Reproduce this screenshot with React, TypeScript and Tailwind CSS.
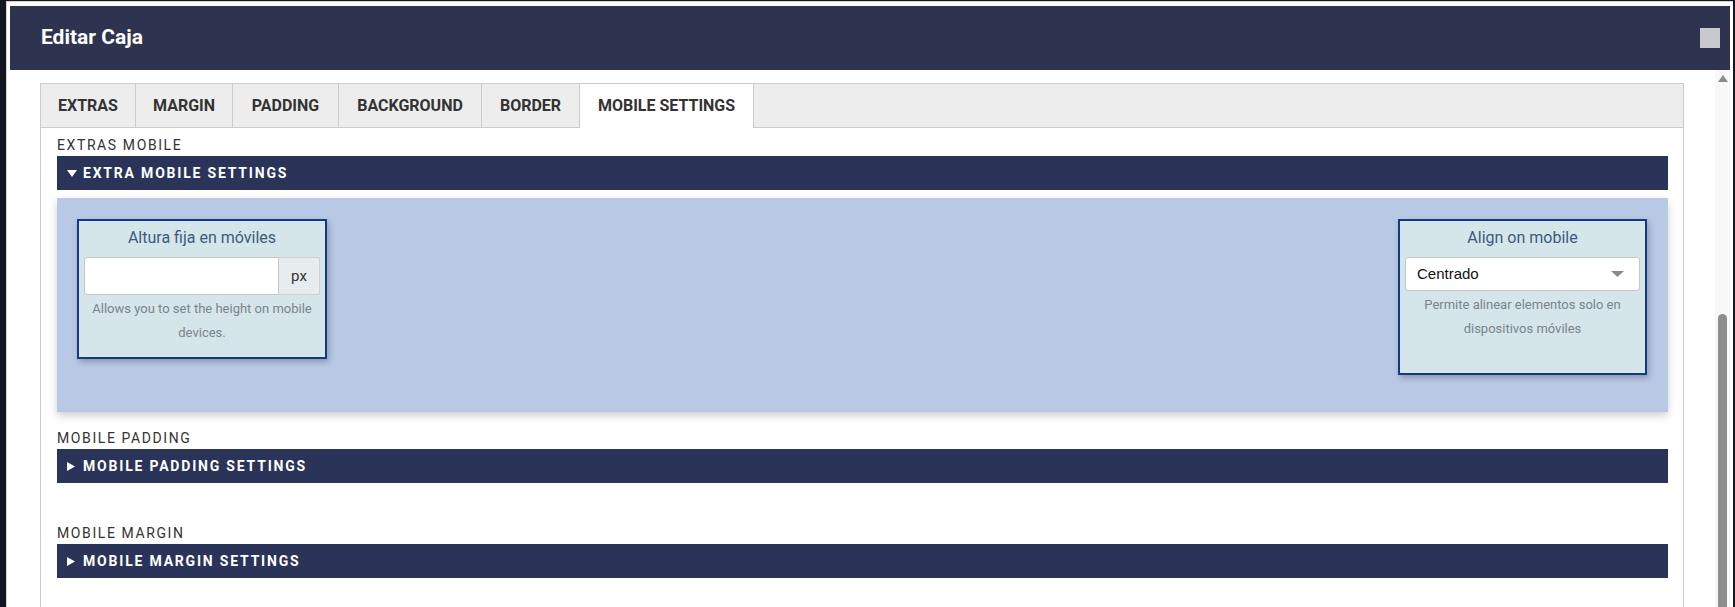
import React from "react";

const tabs: { t: string; w: string }[] = [
  { t: "EXTRAS", w: "w-[95px]" },
  { t: "MARGIN", w: "w-[97px]" },
  { t: "PADDING", w: "w-[106px]" },
  { t: "BACKGROUND", w: "w-[143px]" },
  { t: "BORDER", w: "w-[98px]" },
  { t: "MOBILE SETTINGS", w: "w-[174px]" },
];

function Down() {
  return (
    <svg width="10" height="7" viewBox="0 0 10 7" className="mr-[6px] shrink-0">
      <polygon points="0,0 10,0 5,7" fill="#fff" />
    </svg>
  );
}

function Right() {
  return (
    <svg width="8" height="9" viewBox="0 0 8 9" className="mr-[8px] shrink-0">
      <polygon points="0,0 8,4.5 0,9" fill="#fff" />
    </svg>
  );
}

function SectionBar({ open, text }: { open?: boolean; text: string }) {
  return (
    <div className="flex h-[34px] items-center bg-[#293458] pl-[10px] text-[14px] font-bold tracking-[1.8px] text-white">
      {open ? <Down /> : <Right />}
      <span>{text}</span>
    </div>
  );
}

function Label({ text }: { text: string }) {
  return <div className="mb-px text-[14px] leading-[20px] tracking-[1.6px] text-[#333]">{text}</div>;
}

export default function App() {
  return (
    <div className="h-[607px] w-[1735px] overflow-hidden bg-[#131722] pl-[6px] pr-[2px] pt-px font-['Roboto',sans-serif]">
      <div className="flex h-[620px] flex-col border-l border-t border-[#d4d4d4] bg-white pl-[3px] pr-[3px] pt-[4px]">
        <div className="flex h-[64px] shrink-0 items-center justify-between bg-[#2e3450] pl-[31px] pr-[10px]">
          <div className="text-[21px] font-bold text-white">Editar Caja</div>
          <div className="h-[20px] w-[20px] bg-[#c8c9ce]" />
        </div>
        <div className="flex flex-1">
          <div className="flex-1 pl-[30px] pr-[31px] pt-[13px]">
            <div className="h-[600px] border border-[#ccc]">
              <div className="flex h-[44px] border-b border-[#ccc] bg-[#ededed]">
                {tabs.map((tab, i) => {
                  const active = i === tabs.length - 1;
                  return (
                    <div
                      key={tab.t}
                      className={
                        active
                          ? `-mb-px flex h-[44px] items-center justify-center border-r border-[#ccc] bg-white text-[16px] font-bold text-[#333] ${tab.w}`
                          : `flex items-center justify-center border-r border-[#ccc] text-[16px] font-bold text-[#333] ${tab.w}`
                      }
                    >
                      {tab.t}
                    </div>
                  );
                })}
              </div>
              <div className="pl-[16px] pr-[15px] pt-[7px]">
                <Label text="EXTRAS MOBILE" />
                <SectionBar open text="EXTRA MOBILE SETTINGS" />
                <div className="mt-[8px] flex h-[214px] items-start justify-between bg-[#b8c9e6] pl-[20px] pr-[21px] pt-[21px] shadow-[0_4px_8px_rgba(0,0,0,0.18)]">
                  <div className="flex h-[140px] w-[250px] flex-col border-2 border-[#173a7d] bg-[#d4e6ea] px-[5px] pt-[5px] shadow-[2px_3px_6px_rgba(0,0,0,0.25)]">
                    <div className="mb-[7px] text-center text-[16px] leading-[24px] text-[#3f5a7e]">Altura fija en móviles</div>
                    <div className="flex h-[38px]">
                      <div className="flex-1 rounded-l-[3px] border border-[#c6c6c6] bg-white" />
                      <div className="flex w-[41px] items-center justify-center rounded-r-[3px] border border-l-0 border-[#d0d0d0] bg-[#e9ecef] text-[15px] text-[#333]">
                        px
                      </div>
                    </div>
                    <div className="mt-[2px] text-center text-[13px] leading-[24px] text-[#7b848c]">
                      Allows you to set the height on mobile devices.
                    </div>
                  </div>
                  <div className="flex h-[156px] w-[249px] flex-col border-2 border-[#173a7d] bg-[#d4e6ea] px-[5px] pt-[5px] shadow-[2px_3px_6px_rgba(0,0,0,0.25)]">
                    <div className="mb-[7px] text-center text-[16px] leading-[24px] text-[#3f5a7e]">Align on mobile</div>
                    <div className="flex h-[34px] items-center justify-between rounded-[3px] border border-[#c6c6c6] bg-white pl-[11px] pr-[15px]">
                      <span className="font-['Liberation_Sans',sans-serif] text-[15px] text-[#111]">Centrado</span>
                      <svg width="13" height="6" viewBox="0 0 13 6">
                        <polygon points="0,0 13,0 6.5,6" fill="#8a8a8a" />
                      </svg>
                    </div>
                    <div className="mt-[2px] px-[6px] text-center text-[13px] leading-[24px] text-[#7b848c]">
                      Permite alinear elementos solo en dispositivos móviles
                    </div>
                  </div>
                </div>
                <div className="mt-[16px]">
                  <Label text="MOBILE PADDING" />
                  <SectionBar text="MOBILE PADDING SETTINGS" />
                </div>
                <div className="mt-[40px]">
                  <Label text="MOBILE MARGIN" />
                  <SectionBar text="MOBILE MARGIN SETTINGS" />
                </div>
              </div>
            </div>
          </div>
          <div className="flex w-[15px] shrink-0 flex-col items-center bg-[#f8f8f8] pt-[5px]">
            <svg width="10" height="7" viewBox="0 0 10 7">
              <polygon points="0,7 10,7 5,0" fill="#8a8a8a" />
            </svg>
            <div className="mt-[232px] h-[400px] w-[9px] rounded-t-full bg-[#8e8e8e]" />
          </div>
        </div>
      </div>
    </div>
  );
}
